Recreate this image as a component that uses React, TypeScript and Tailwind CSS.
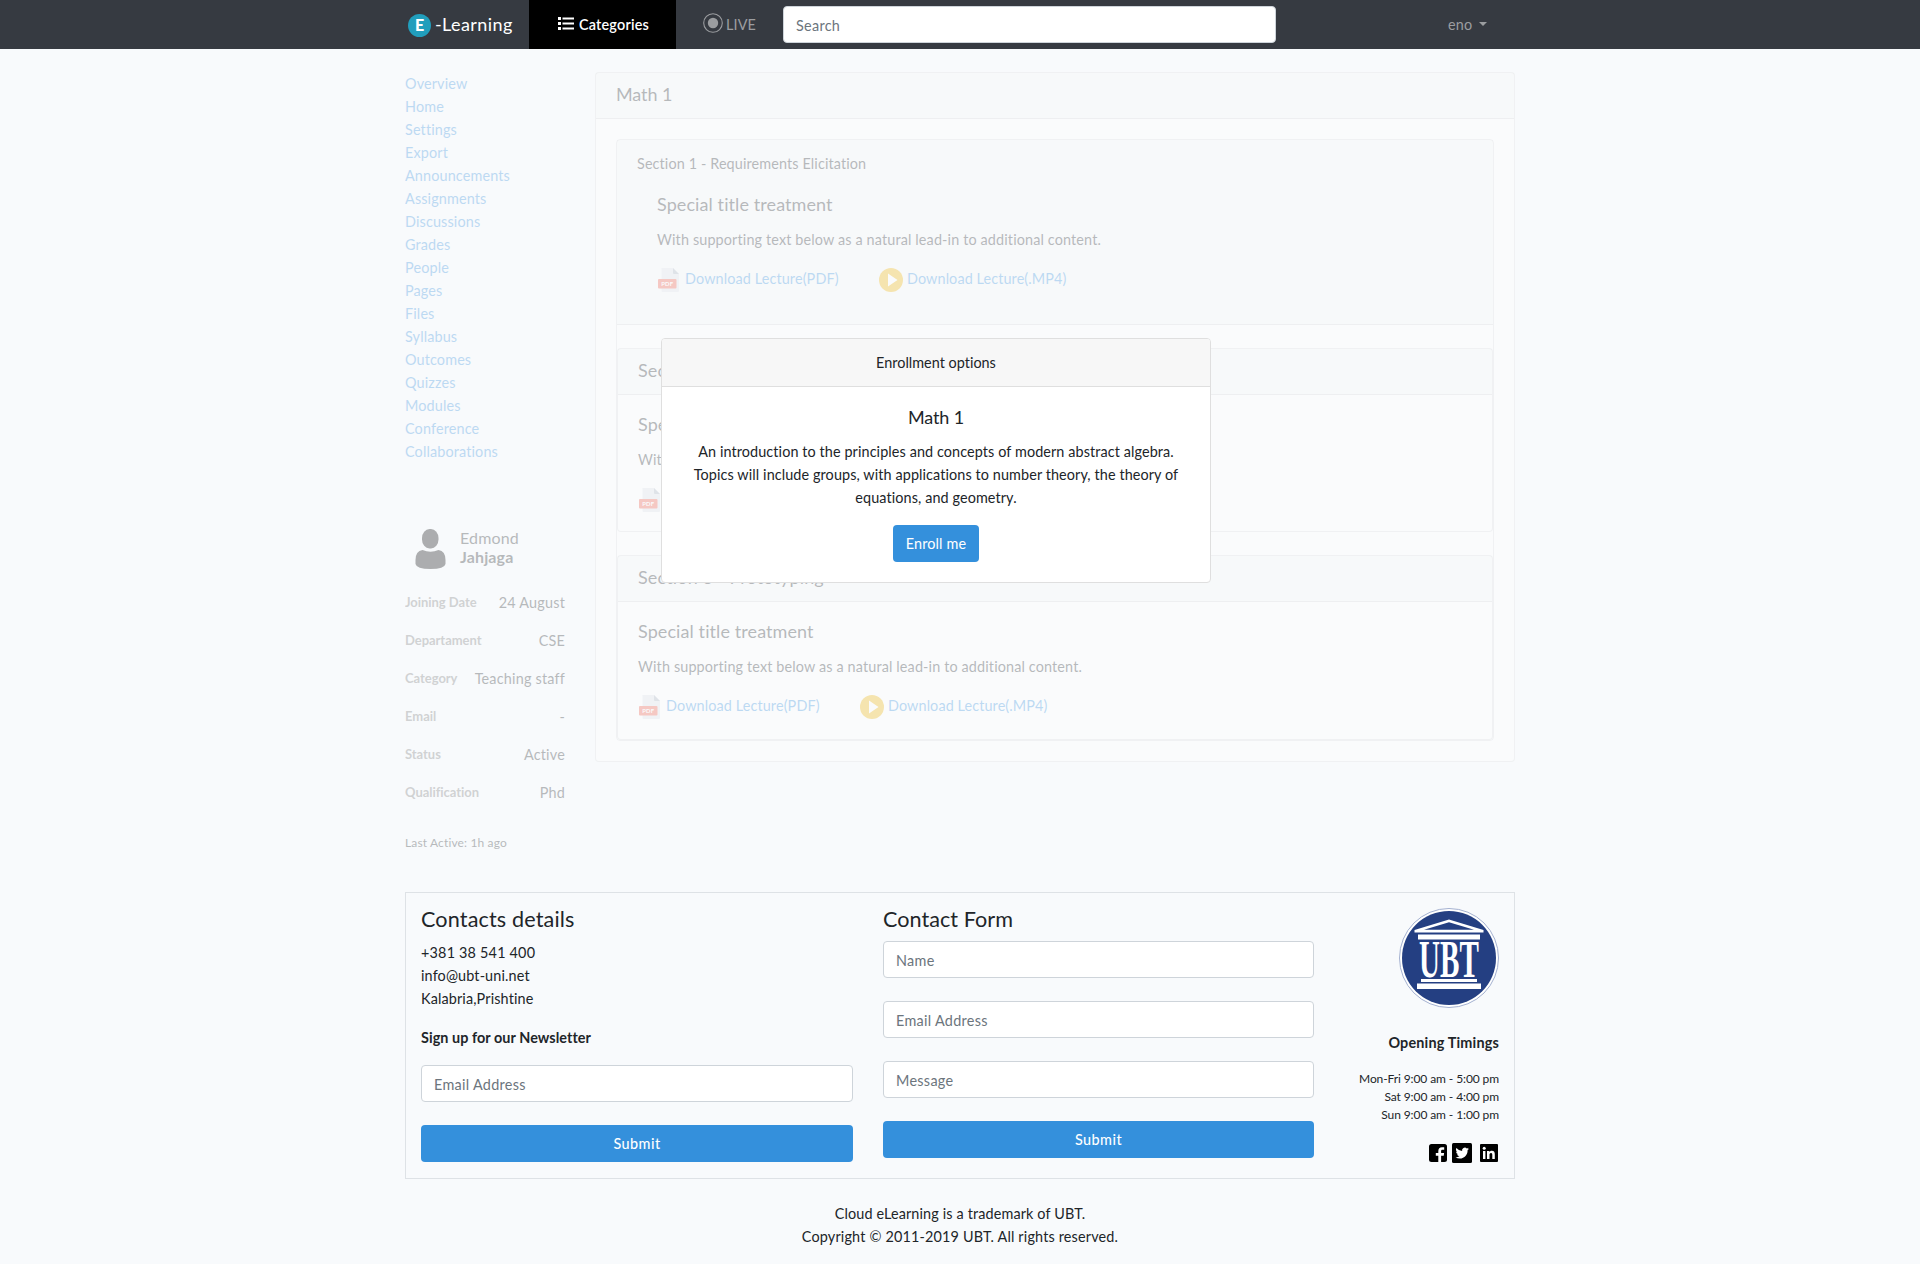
import React from "react";

const NAV = [
  "Overview", "Home", "Settings", "Export", "Announcements", "Assignments", "Discussions", "Grades", "People",
  "Pages", "Files", "Syllabus", "Outcomes", "Quizzes", "Modules", "Conference", "Collaborations",
];

const DETAILS: [string, string][] = [
  ["Joining Date", "24 August"],
  ["Departament", "CSE"],
  ["Category", "Teaching staff"],
  ["Email", "-"],
  ["Status", "Active"],
  ["Qualification", "Phd"],
];

function PdfIcon() {
  return (
    <svg className="h-6 w-6 shrink-0" viewBox="0 0 24 24">
      <path d="M4.500 0H16l6 6v17a1 1 0 0 1-1 1H5.500a1 1 0 0 1-1-1V1a1 1 0 0 1 0-1z" fill="#dfe3e8" />
      <path d="M16 0l6 6h-5a1 1 0 0 1-1-1z" fill="#a9b1bc" />
      <rect x="1" y="11" width="18.500" height="9.500" rx="1" fill="#f15642" />
      <text x="4.200" y="17.800" fontSize="5.600" fontWeight="700" fontFamily="Lato, sans-serif" fill="#fff" textLength="12" lengthAdjust="spacingAndGlyphs">PDF</text>
    </svg>
  );
}

function PlayIcon() {
  return (
    <svg className="h-6 w-6 shrink-0" viewBox="0 0 24 24">
      <circle cx="12" cy="12" r="12" fill="#f0b400" />
      <path d="M9 5.500v13l9.500-6.500z" fill="#fff" />
    </svg>
  );
}

function Lecture() {
  return (
    <>
      <h5 className="mb-3 h-[21px] text-[18px] leading-[19px] tracking-[0.09px]">Special title treatment</h5>
      <p className="mb-[17px]">With supporting text below as a natural lead-in to additional content.</p>
      <div className="flex h-6 items-start text-[#3490dc]">
        <PdfIcon />
        <a className="ml-1 w-[154px] whitespace-nowrap leading-[21px] tracking-[0.12px]">Download Lecture(PDF)</a>
        <span className="ml-10"><PlayIcon /></span>
        <a className="ml-1 whitespace-nowrap leading-[21px] tracking-[0.1px]">Download Lecture(.MP4)</a>
      </div>
    </>
  );
}

function SectionCard({ title, className }: { title: string; className: string }) {
  return (
    <div className={`rounded border border-black/[.125] bg-white ${className}`}>
      <div className="h-[46px] border-b border-black/[.125] bg-black/[.03] px-5 text-[18px] leading-[43px]">{title}</div>
      <div className="px-5 pt-5"><Lecture /></div>
    </div>
  );
}

function Field({ label, className = "" }: { label: string; className?: string }) {
  return (
    <input
      placeholder={label}
      className={`block h-[37px] w-full rounded border border-[#ced4da] bg-white px-3 pt-0.5 tracking-[0.3px] placeholder:text-[#6c757d] ${className}`}
    />
  );
}

function Submit() {
  return (
    <button className="mt-[23px] block h-[37px] w-full rounded bg-[#3490dc] font-medium tracking-[0.45px] text-white">Submit</button>
  );
}

function UbtLogo() {
  return (
    <svg className="h-[100px] w-[100px]" viewBox="0 0 100 100">
      <circle cx="50" cy="50" r="49.500" fill="#fff" stroke="#a3b0d0" strokeWidth="1" />
      <circle cx="50" cy="50" r="47" fill="#243f82" />
      <path d="M15.500 22L50 11.500 84.500 22v2.500h-69z" fill="#fff" />
      <path d="M25 21.800L50 14.300l25 7.500z" fill="#243f82" />
      <rect x="19" y="26.500" width="62" height="5" fill="#fff" />
      <text x="20" y="69" textLength="60" lengthAdjust="spacingAndGlyphs" fontSize="53" fontWeight="700" fontFamily="'Liberation Serif', serif" fill="#fff">UBT</text>
      <rect x="22" y="71" width="56" height="3" fill="#fff" />
      <rect x="18" y="75.500" width="64" height="5.500" fill="#fff" />
    </svg>
  );
}

export default function App() {
  return (
    <div className="relative h-[1264px] overflow-hidden bg-[#f8fafc] font-[Lato,'Noto_Sans',sans-serif] text-[14.4px] leading-[23px] tracking-[0.14px] text-[#212529]">
      <nav className="h-[49px] bg-[#363a41]">
        <div className="mx-auto flex h-full w-[1110px] items-center">
          <svg className="ml-[3px] mt-px h-[23px] w-[23px]" viewBox="0 0 23 23">
            <circle cx="11.500" cy="11.500" r="11.500" fill="#219ebc" />
            <text x="11.700" y="17" textAnchor="middle" fontSize="16" fontWeight="900" fontFamily="Lato, sans-serif" fill="#fff">E</text>
          </svg>
          <span className="ml-1 w-[94px] text-[18px] tracking-[0.4px] text-white">-Learning</span>
          <div className="flex h-full w-[147px] items-center bg-black font-semibold text-white">
            <svg className="ml-[29px] -mt-0.5 h-[13px] w-4" viewBox="0 0 16 13" fill="#fff">
              <path d="M0 0h3v3H0zM0 5h3v3H0zM0 10h3v3H0zM4.500 .5H16v2H4.500zM4.500 5.500H16v2H4.500zM4.500 10.500H16v2H4.500z" />
            </svg>
            <span className="ml-[5px] tracking-[0.2px]">Categories</span>
          </div>
          <svg className="ml-[27px] -mt-[3px] h-5 w-5" viewBox="0 0 20 20">
            <circle cx="10" cy="10" r="9.300" fill="none" stroke="#9b9da0" strokeWidth="1.100" />
            <circle cx="10" cy="10" r="5.200" fill="#9b9da0" />
          </svg>
          <span className="ml-[3px] w-[57px] text-[#9b9da0]">LIVE</span>
          <div className="w-[493px]"><Field label="Search" /></div>
          <span className="ml-[172px] text-[#9b9da0]">eno</span>
          <span className="-mt-0.5 ml-[7px] border-x-[4.5px] border-t-[4.5px] border-x-transparent border-t-[#9b9da0]" />
        </div>
      </nav>

      <div className="mx-auto mt-[23px] flex h-[820px] w-[1110px] items-start opacity-30">
        <aside className="w-[160px]">
          <ul className="text-[#3490dc]">
            {NAV.map((item) => <li key={item} className="h-[23px]">{item}</li>)}
          </ul>
          <div className="mt-[66px] flex h-10 items-start">
            <svg className="ml-[10px] h-10 w-[31px]" viewBox="0 0 31 40" fill="#000">
              <rect x="7" y="0" width="16.500" height="19.500" rx="7.500" ry="9" />
              <path d="M7.500 21q8 3.500 16 0 7 1 7 10v4q-1 5-15 5t-15-5v-4q0-9 7-10z" />
            </svg>
            <div className="-mt-px ml-[14px] text-[16px] leading-[19px]">
              <div>Edmond</div>
              <div className="font-bold">Jahjaga</div>
            </div>
          </div>
          <dl className="mt-[14px]">
            {DETAILS.map(([k, v]) => (
              <div key={k} className="flex h-[38px] items-center justify-between">
                <dt className="text-[13px] font-bold tracking-[-0.04px] text-[#777]">{k}</dt>
                <dd className="tracking-[0.2px]">{v}</dd>
              </div>
            ))}
          </dl>
          <p className="mt-5 text-[12px]">Last Active: 1h ago</p>
        </aside>

        <main className="ml-[30px] h-[690px] w-[920px] rounded border border-black/[.125] bg-white">
          <div className="h-[46px] border-b border-black/[.125] bg-black/[.03] px-5 text-[18px] leading-[43px] tracking-[-0.1px]">Math 1</div>
          <div className="p-5">
            <div className="rounded border border-black/[.125]">
              <div className="h-[185px] border-b border-black/[.125] bg-black/[.03] px-5 pt-3">
                <div className="tracking-[0.12px]">Section 1 - Requirements Elicitation</div>
                <div className="px-5 pt-5"><Lecture /></div>
              </div>
              <SectionCard title="Section 2" className="mt-[23px] h-[184px]" />
              <SectionCard title="Section 3 - Prototyping" className="mt-[23px] h-[185px]" />
            </div>
          </div>
        </main>
      </div>

      <div role="dialog" className="absolute left-[661px] top-[338px] h-[245px] w-[550px] overflow-hidden rounded border border-[#dfdfdf] bg-white text-center">
        <div className="h-12 border-b border-[#dfdfdf] bg-[#f7f7f7] leading-[47px] tracking-[0.02px]">Enrollment options</div>
        <div className="p-5">
          <h5 className="mb-[13px] text-[18px] leading-[20px] tracking-[-0.1px]">Math 1</h5>
          <p className="mb-4 tracking-[0.1px]">
            An introduction to the principles and concepts of modern abstract algebra.<br />
            Topics will include groups, with applications to number theory, the theory of<br />
            equations, and geometry.
          </p>
          <button className="h-[37px] w-[86px] rounded bg-[#3490dc] text-white">Enroll me</button>
        </div>
      </div>

      <footer>
        <div className="mx-auto flex h-[287px] w-[1110px] border border-[#dee2e6] p-[15px]">
          <div className="w-[432px]">
            <h4 className="mb-[10px] text-[21.6px] leading-[23px]">Contacts details</h4>
            <p className="tracking-[0.2px]">+381 38 541 400</p>
            <p>info@ubt-uni.net</p>
            <p>Kalabria,Prishtine</p>
            <p className="mt-4 font-bold tracking-[0.06px]">Sign up for our Newsletter</p>
            <Field label="Email Address" className="mt-4" />
            <Submit />
          </div>
          <div className="ml-[30px] w-[431px]">
            <h4 className="mb-[10px] text-[21.6px] leading-[23px] tracking-[0.04px]">Contact Form</h4>
            <Field label="Name" />
            <Field label="Email Address" className="mt-[23px]" />
            <Field label="Message" className="mt-[23px]" />
            <Submit />
          </div>
          <div className="flex grow flex-col items-end">
            <UbtLogo />
            <p className="mt-[23px] font-bold tracking-[0.18px]">Opening Timings</p>
            <div className="mt-4 text-right text-[12px] leading-[18px] tracking-[-0.1px]">
              <p>Mon-Fri 9:00 am - 5:00 pm</p>
              <p>Sat 9:00 am - 4:00 pm</p>
              <p>Sun 9:00 am - 1:00 pm</p>
            </div>
            <div className="mt-[19px] flex items-center">
              <svg className="h-[18px] w-[18px]" viewBox="0 0 18 18">
                <rect width="18" height="18" rx="2.500" fill="#000" />
                <path d="M9.300 18v-6.300H6.800V9h2.500V7.200c0-2.500 1.400-3.900 3.600-3.900h2.300v2.400h-1.600c-1 0-1.500.5-1.500 1.300V9h3l-.4 2.700h-2.600V18z" fill="#fff" />
              </svg>
              <svg className="ml-[5px] h-5 w-5" viewBox="0 0 20 20">
                <rect width="20" height="20" rx="1.500" fill="#000" />
                <path transform="translate(3.500 3.300) scale(.56)" d="M23.950 4.570a10 10 0 0 1-2.820.77 4.960 4.960 0 0 0 2.160-2.720 9.900 9.900 0 0 1-3.120 1.180 4.920 4.920 0 0 0-8.380 4.480A13.930 13.930 0 0 1 1.640 3.160a4.920 4.920 0 0 0 1.520 6.570 4.900 4.900 0 0 1-2.230-.61v.06a4.920 4.920 0 0 0 3.950 4.830 5 5 0 0 1-2.210.08 4.940 4.940 0 0 0 4.600 3.420A9.870 9.870 0 0 1 0 19.540a13.990 13.990 0 0 0 7.550 2.210c9.050 0 14-7.500 14-13.980 0-.21 0-.42-.02-.63a9.940 9.940 0 0 0 2.460-2.550z" fill="#fff" />
              </svg>
              <svg className="ml-2 mr-px h-[18px] w-[18px]" viewBox="0 0 18 18">
                <rect width="18" height="18" rx="1" fill="#000" />
                <path d="M3 7h2.400v8H3zM7 7h2.300v1.100C9.700 7.400 10.600 6.800 11.800 6.800c2.500 0 3 1.600 3 3.800V15h-2.500v-3.900c0-1 0-2.200-1.300-2.200s-1.500 1-1.500 2.100v4H7z" fill="#fff" />
                <circle cx="4.200" cy="4.300" r="1.500" fill="#fff" />
              </svg>
            </div>
          </div>
        </div>
        <div className="mt-[23px] text-center">
          <p>Cloud eLearning is a trademark of UBT.</p>
          <p className="tracking-[0.17px]">Copyright © 2011-2019 UBT. All rights reserved.</p>
        </div>
      </footer>
    </div>
  );
}
